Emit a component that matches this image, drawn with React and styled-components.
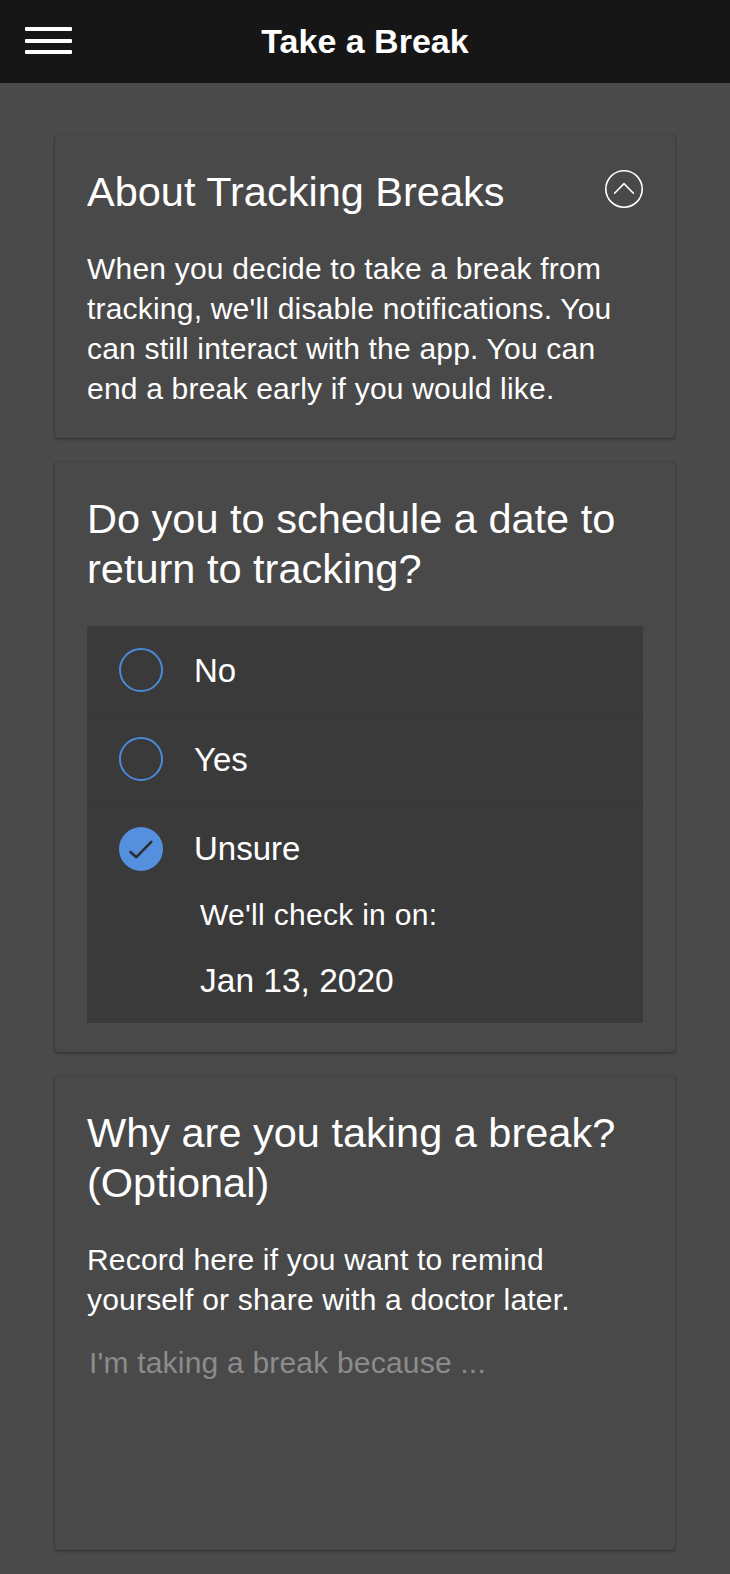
import React from "react";
import styled, { createGlobalStyle } from "styled-components";

const GlobalStyle = createGlobalStyle`
  * { box-sizing: border-box; }
  html, body {
    margin: 0;
    padding: 0;
    background: #4a4a4a;
  }
  body {
    font-family: "Liberation Sans", Arial, Helvetica, sans-serif;
    color: #ffffff;
    -webkit-font-smoothing: antialiased;
  }
`;

const Page = styled.div`
  min-height: 100vh;
  background: #4a4a4a;
`;

const TopBar = styled.header`
  height: 83px;
  background: #161616;
  display: grid;
  grid-template-columns: 1fr auto 1fr;
  align-items: center;
`;

const MenuButton = styled.button`
  justify-self: start;
  margin-left: 25px;
  padding: 0 0 2px;
  border: none;
  background: none;
  display: flex;
  flex-direction: column;
  gap: 7.5px;
  cursor: pointer;
`;

const MenuBar = styled.span`
  display: block;
  width: 47px;
  height: 4px;
  border-radius: 1px;
  background: #ffffff;
`;

const BarTitle = styled.h1`
  margin: 0;
  padding-bottom: 2px;
  font-size: 34px;
  line-height: 1;
  font-weight: 700;
  color: #ffffff;
`;

const Content = styled.main`
  display: flex;
  flex-direction: column;
  align-items: center;
  gap: 24px;
  padding: 52px 0 24px;
`;

const Card = styled.section`
  width: 620px;
  background: #494949;
  border-radius: 3px;
  box-shadow: 0 1px 3px rgba(0, 0, 0, 0.4), 0 0 1px rgba(0, 0, 0, 0.25);
  padding: 32px 32px 29px;
`;

const CardHeader = styled.div`
  display: flex;
  justify-content: space-between;
  align-items: flex-start;
`;

const Heading = styled.h2`
  margin: 0;
  font-size: 41.5px;
  line-height: 50px;
  font-weight: 400;
  color: #ffffff;
`;

const Body = styled.p`
  margin: 32px 0 0;
  font-size: 30px;
  line-height: 40px;
  letter-spacing: 0.2px;
  color: #ffffff;
`;

const CollapseButton = styled.button`
  margin-top: 3px;
  padding: 0;
  border: none;
  background: none;
  width: 38px;
  height: 38px;
  flex: none;
  cursor: pointer;
  svg { display: block; }
`;

const RadioGroup = styled.div`
  margin-top: 32px;
  background: #3a3a3a;
`;

const RadioRow = styled.label`
  height: 89px;
  display: flex;
  align-items: center;
  gap: 31px;
  padding-left: 32px;
  border-bottom: ${(p) => (p.$divider ? "1px solid #363636" : "none")};
  cursor: pointer;
`;

const RadioMark = styled.span`
  width: 44px;
  height: 44px;
  flex: none;
  border-radius: 50%;
  border: ${(p) => (p.$checked ? "none" : "2px solid #4a8ad9")};
  background: ${(p) => (p.$checked ? "#5490de" : "transparent")};
  display: flex;
  align-items: center;
  justify-content: center;
  svg { display: block; }
`;

const RadioLabel = styled.span`
  font-size: 33px;
  line-height: 1;
  color: #ffffff;
`;

const Followup = styled.div`
  padding: 2px 0 20px 113px;
`;

const FollowupLabel = styled.div`
  font-size: 30px;
  line-height: 40px;
  letter-spacing: 0.3px;
  color: #ffffff;
`;

const DateValue = styled.div`
  margin-top: 24px;
  font-size: 33.5px;
  line-height: 44px;
  color: #ffffff;
`;

const Notes = styled.textarea`
  display: block;
  width: 100%;
  height: 189px;
  margin-top: 12px;
  padding: 11px 2px;
  border: none;
  outline: none;
  resize: none;
  background: transparent;
  color: #ffffff;
  font-family: inherit;
  font-size: 30px;
  line-height: 40px;
  letter-spacing: 0.2px;
  &::placeholder {
    color: #8c8c8c;
    opacity: 1;
  }
`;

const ChevronUpCircle = () => (
  <svg width="38" height="38" viewBox="0 0 38 38" fill="none">
    <circle cx="19" cy="19" r="18.2" stroke="#ffffff" strokeWidth="1.6" />
    <polyline
      points="9.6,23.3 19,13.6 28.4,23.3"
      stroke="#ffffff"
      strokeWidth="1.6"
      strokeLinecap="round"
      strokeLinejoin="round"
    />
  </svg>
);

const CheckIcon = () => (
  <svg width="44" height="44" viewBox="0 0 44 44" fill="none">
    <polyline
      points="11.5,25 17.3,30.2 32.3,14.8"
      stroke="#2e2e2e"
      strokeWidth="2.6"
      strokeLinecap="round"
      strokeLinejoin="round"
    />
  </svg>
);

const options = [
  { key: "no", label: "No" },
  { key: "yes", label: "Yes" },
  { key: "unsure", label: "Unsure" },
];

export default function App() {
  const selected = "unsure";
  return (
    <Page>
      <GlobalStyle />
      <TopBar>
        <MenuButton aria-label="Menu">
          <MenuBar />
          <MenuBar />
          <MenuBar />
        </MenuButton>
        <BarTitle>Take a Break</BarTitle>
        <span />
      </TopBar>
      <Content>
        <Card>
          <CardHeader>
            <Heading>About Tracking Breaks</Heading>
            <CollapseButton aria-label="Collapse">
              <ChevronUpCircle />
            </CollapseButton>
          </CardHeader>
          <Body>
            When you decide to take a break from tracking, we'll disable
            notifications. You can still interact with the app. You can end a
            break early if you would like.
          </Body>
        </Card>

        <Card>
          <Heading>Do you to schedule a date to return to tracking?</Heading>
          <RadioGroup>
            {options.map((o, i) => {
              const checked = o.key === selected;
              return (
                <RadioRow key={o.key} $divider={i < options.length - 1}>
                  <RadioMark $checked={checked}>
                    {checked && <CheckIcon />}
                  </RadioMark>
                  <RadioLabel>{o.label}</RadioLabel>
                </RadioRow>
              );
            })}
            <Followup>
              <FollowupLabel>We'll check in on:</FollowupLabel>
              <DateValue>Jan 13, 2020</DateValue>
            </Followup>
          </RadioGroup>
        </Card>

        <Card>
          <Heading>Why are you taking a break? (Optional)</Heading>
          <Body>
            Record here if you want to remind yourself or share with a doctor
            later.
          </Body>
          <Notes placeholder="I'm taking a break because ..." />
        </Card>
      </Content>
    </Page>
  );
}
